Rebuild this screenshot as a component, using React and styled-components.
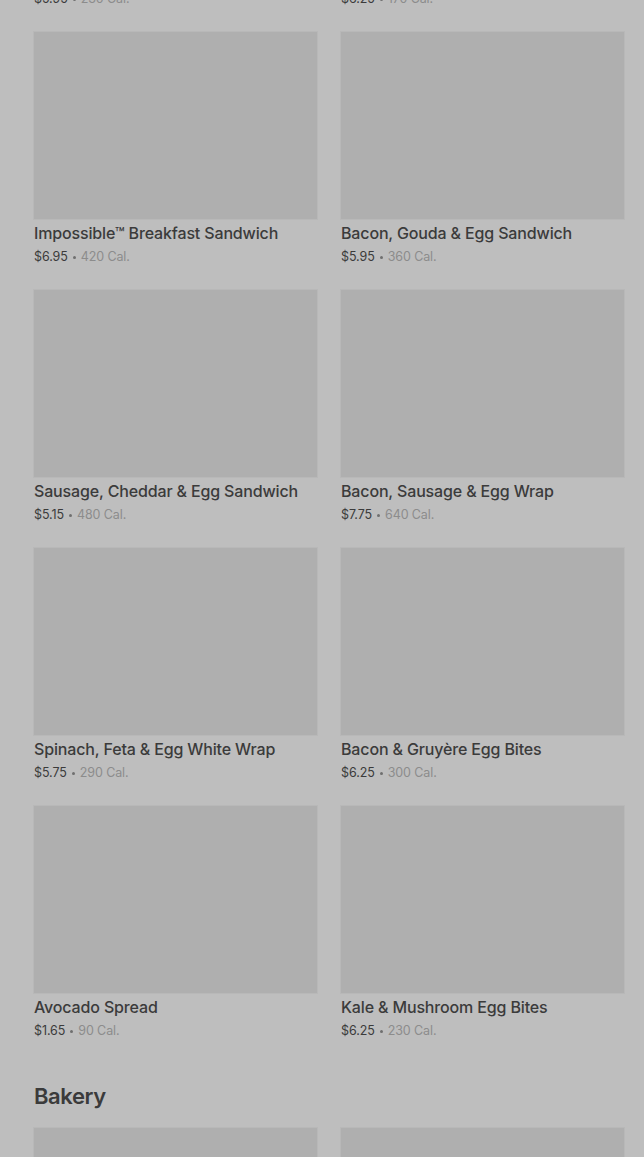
import React from 'react'
import styled, { createGlobalStyle } from 'styled-components'

const GlobalStyle = createGlobalStyle`
  html, body {
    margin: 0;
    padding: 0;
    background: #bebebe;
    overflow: hidden;
  }
  body {
    font-family: Inter, "Noto Sans", sans-serif;
  }
`

const Page = styled.div`
  width: 644px;
  height: 1157px;
  overflow: hidden;
  background: #bebebe;
`

const Scroller = styled.div`
  margin-top: -226px;
  padding: 0 20px 0 34px;
`

const Grid = styled.div`
  display: grid;
  grid-template-columns: 283px 283px;
  column-gap: 24px;
  row-gap: 23px;
`

const Card = styled.div`
  display: flex;
  flex-direction: column;
`

const Thumb = styled.div`
  height: 187px;
  background: #afafaf;
  box-shadow: 0 0 0 1px #b8b8b8;
`

const Name = styled.div`
  margin-top: 4px;
  font-size: 16px;
  line-height: 20px;
  font-weight: 500;
  letter-spacing: -0.15px;
  color: #3b3b3b;
  white-space: nowrap;
`

const Meta = styled.div`
  margin-top: 4px;
  font-size: 12.5px;
  line-height: 20px;
  color: #8c8c8c;
  letter-spacing: -0.1px;
  display: flex;
  align-items: center;
`

const Price = styled.span`
  color: #3b3b3b;
`

const Dot = styled.span`
  width: 3px;
  height: 3px;
  border-radius: 50%;
  background: #6f6f6f;
  margin: 1px 5px 0;
`

const SectionTitle = styled.h2`
  margin: 41px 0 18px;
  font-size: 22px;
  line-height: 28px;
  font-weight: 600;
  color: #3b3b3b;
  letter-spacing: -0.4px;
`

const breakfast = [
  { name: 'Double-Smoked Bacon Sandwich', price: '$5.95', cal: '230 Cal.' },
  { name: 'Turkey Bacon Sandwich', price: '$6.25', cal: '170 Cal.' },
  { name: 'Impossible™ Breakfast Sandwich', price: '$6.95', cal: '420 Cal.' },
  { name: 'Bacon, Gouda & Egg Sandwich', price: '$5.95', cal: '360 Cal.' },
  { name: 'Sausage, Cheddar & Egg Sandwich', price: '$5.15', cal: '480 Cal.' },
  { name: 'Bacon, Sausage & Egg Wrap', price: '$7.75', cal: '640 Cal.' },
  { name: 'Spinach, Feta & Egg White Wrap', price: '$5.75', cal: '290 Cal.' },
  { name: 'Bacon & Gruyère Egg Bites', price: '$6.25', cal: '300 Cal.' },
  { name: 'Avocado Spread', price: '$1.65', cal: '90 Cal.' },
  { name: 'Kale & Mushroom Egg Bites', price: '$6.25', cal: '230 Cal.' },
]

const bakery = [
  { name: 'Butter Croissant', price: '$3.45', cal: '260 Cal.' },
  { name: 'Chocolate Croissant', price: '$3.75', cal: '300 Cal.' },
]

const Item = ({ item }) => (
  <Card>
    <Thumb />
    <Name>{item.name}</Name>
    <Meta>
      <Price>{item.price}</Price>
      <Dot />
      {item.cal}
    </Meta>
  </Card>
)

const App = () => {
  return (
    <Page>
      <GlobalStyle />
      <Scroller>
        <Grid>
          {breakfast.map((item) => (
            <Item key={item.name} item={item} />
          ))}
        </Grid>
        <SectionTitle>Bakery</SectionTitle>
        <Grid>
          {bakery.map((item) => (
            <Item key={item.name} item={item} />
          ))}
        </Grid>
      </Scroller>
    </Page>
  )
}

export default App
